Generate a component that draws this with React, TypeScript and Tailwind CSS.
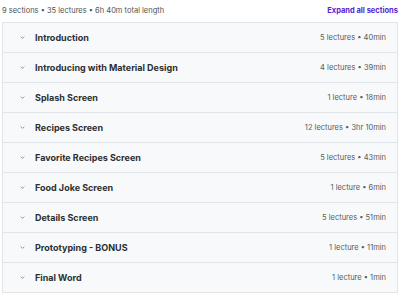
import React from "react";

interface Section {
  title: string;
  meta: string;
}

const sections: Section[] = [
  { title: "Introduction", meta: "5 lectures • 40min" },
  { title: "Introducing with Material Design", meta: "4 lectures • 39min" },
  { title: "Splash Screen", meta: "1 lecture • 18min" },
  { title: "Recipes Screen", meta: "12 lectures • 3hr 10min" },
  { title: "Favorite Recipes Screen", meta: "5 lectures • 43min" },
  { title: "Food Joke Screen", meta: "1 lecture • 6min" },
  { title: "Details Screen", meta: "5 lectures • 51min" },
  { title: "Prototyping - BONUS", meta: "1 lecture • 11min" },
  { title: "Final Word", meta: "1 lecture • 1min" },
];

const Chevron = () => (
  <svg width="7" height="7" viewBox="0 0 24 24" fill="none" stroke="#6a6f73" strokeWidth="2.5" strokeLinecap="round" strokeLinejoin="round">
    <path d="M7 10l5 5 5-5" />
  </svg>
);

const App = () => {
  return (
    <div className="w-[400px] h-[295px] bg-white font-['Inter',sans-serif] text-[#2d2f31]">
      {/* 헤더 */}
      <div className="h-[22px] flex items-center justify-between px-[2px]">
        <span className="text-[7.5px] text-[#4d5256]">9 sections • 35 lectures • 6h 40m total length</span>
        <button className="text-[7.5px] font-bold text-[#5624d0]">Expand all sections</button>
      </div>

      {/* 섹션 목록 */}
      <div className="mx-[2px] border border-[#e2e5e8]">
        {sections.map((s, idx) => (
          <div
            key={idx}
            className={`h-[29px] box-content flex items-center bg-[#f7f9fa] pl-[16px] pr-[11px] ${
              idx < sections.length - 1 ? "border-b border-[#e2e5e8]" : ""
            }`}
          >
            <Chevron />
            <span className="ml-[9px] text-[9px] font-bold flex-1 text-[#2d2f31]">{s.title}</span>
            <span className="text-[7.5px] text-[#585c60]">{s.meta}</span>
          </div>
        ))}
      </div>
    </div>
  );
};

export default App;
